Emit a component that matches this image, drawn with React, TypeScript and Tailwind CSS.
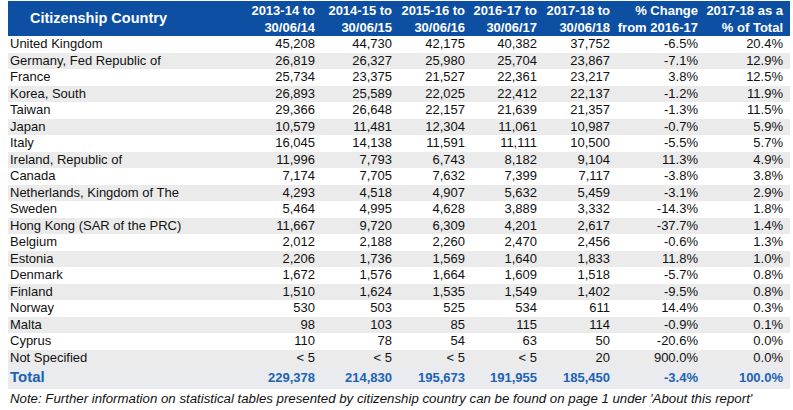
const rows: [string, string, string, string, string, string, string, string][] = [
  ["United Kingdom", "45,208", "44,730", "42,175", "40,382", "37,752", "-6.5%", "20.4%"],
  ["Germany, Fed Republic of", "26,819", "26,327", "25,980", "25,704", "23,867", "-7.1%", "12.9%"],
  ["France", "25,734", "23,375", "21,527", "22,361", "23,217", "3.8%", "12.5%"],
  ["Korea, South", "26,893", "25,589", "22,025", "22,412", "22,137", "-1.2%", "11.9%"],
  ["Taiwan", "29,366", "26,648", "22,157", "21,639", "21,357", "-1.3%", "11.5%"],
  ["Japan", "10,579", "11,481", "12,304", "11,061", "10,987", "-0.7%", "5.9%"],
  ["Italy", "16,045", "14,138", "11,591", "11,111", "10,500", "-5.5%", "5.7%"],
  ["Ireland, Republic of", "11,996", "7,793", "6,743", "8,182", "9,104", "11.3%", "4.9%"],
  ["Canada", "7,174", "7,705", "7,632", "7,399", "7,117", "-3.8%", "3.8%"],
  ["Netherlands, Kingdom of The", "4,293", "4,518", "4,907", "5,632", "5,459", "-3.1%", "2.9%"],
  ["Sweden", "5,464", "4,995", "4,628", "3,889", "3,332", "-14.3%", "1.8%"],
  ["Hong Kong (SAR of the PRC)", "11,667", "9,720", "6,309", "4,201", "2,617", "-37.7%", "1.4%"],
  ["Belgium", "2,012", "2,188", "2,260", "2,470", "2,456", "-0.6%", "1.3%"],
  ["Estonia", "2,206", "1,736", "1,569", "1,640", "1,833", "11.8%", "1.0%"],
  ["Denmark", "1,672", "1,576", "1,664", "1,609", "1,518", "-5.7%", "0.8%"],
  ["Finland", "1,510", "1,624", "1,535", "1,549", "1,402", "-9.5%", "0.8%"],
  ["Norway", "530", "503", "525", "534", "611", "14.4%", "0.3%"],
  ["Malta", "98", "103", "85", "115", "114", "-0.9%", "0.1%"],
  ["Cyprus", "110", "78", "54", "63", "50", "-20.6%", "0.0%"],
  ["Not Specified", "< 5", "< 5", "< 5", "< 5", "20", "900.0%", "0.0%"],
];

const total = ["229,378", "214,830", "195,673", "191,955", "185,450", "-3.4%", "100.0%"];

const headers = [
  ["2013-14 to", "30/06/14"],
  ["2014-15 to", "30/06/15"],
  ["2015-16 to", "30/06/16"],
  ["2016-17 to", "30/06/17"],
  ["2017-18 to", "30/06/18"],
  ["% Change", "from 2016-17"],
  ["2017-18 as a", "% of Total"],
];

const widths = ["w-[76px]", "w-[77px]", "w-[73px]", "w-[72px]", "w-[73px]", "w-[88px]", "w-[86px]"];

export default function App() {
  return (
    <div className="w-[793px] h-[410px] bg-white pt-[1px] text-[#111] font-['Liberation_Sans',Arial,sans-serif] overflow-hidden">
      <table className="ml-[8px] w-[782px] table-fixed border-collapse">
        <colgroup>
          <col className="w-[237px]" />
          {widths.map((w, i) => (
            <col key={i} className={w} />
          ))}
        </colgroup>
        <thead>
          <tr className="bg-[#0c4fa3] text-white h-[35px]">
            <th className="text-left pl-[22px] text-[14.5px] font-bold align-middle">Citizenship Country</th>
            {headers.map(([a, b], i) => (
              <th key={i} className={`text-right text-[13px] font-bold leading-[17px] ${i === 6 ? "pr-[7px]" : "pr-[6px]"} whitespace-nowrap`}>
                <div>{a}</div>
                <div>{b}</div>
              </th>
            ))}
          </tr>
        </thead>
        <tbody className="text-[13px]">
          {rows.map((r, i) => (
            <tr key={r[0]} className={`h-[16.5px] leading-[16px] ${i % 2 === 1 ? "bg-[#ebebeb]" : "bg-white"}`}>
              <td className="pl-[2px] whitespace-nowrap">{r[0]}</td>
              {r.slice(1).map((v, j) => (
                <td key={j} className={`text-right whitespace-nowrap ${j === 6 ? "pr-[7px]" : "pr-[6px]"}`}>
                  {v}
                </td>
              ))}
            </tr>
          ))}
          <tr className="h-[19px] bg-[#e9ebee] text-[#1c63b4] font-bold">
            <td className="pl-[2px] text-[15px]">Total</td>
            {total.map((v, j) => (
              <td key={j} className={`text-right text-[13px] whitespace-nowrap ${j === 6 ? "pr-[7px]" : "pr-[6px]"}`}>
                {v}
              </td>
            ))}
          </tr>
        </tbody>
      </table>
      <p className="ml-[10px] mt-[1px] text-[13.25px] italic leading-[17px] whitespace-nowrap">
        Note: Further information on statistical tables presented by citizenship country can be found on page 1 under 'About this report'
      </p>
    </div>
  );
}
